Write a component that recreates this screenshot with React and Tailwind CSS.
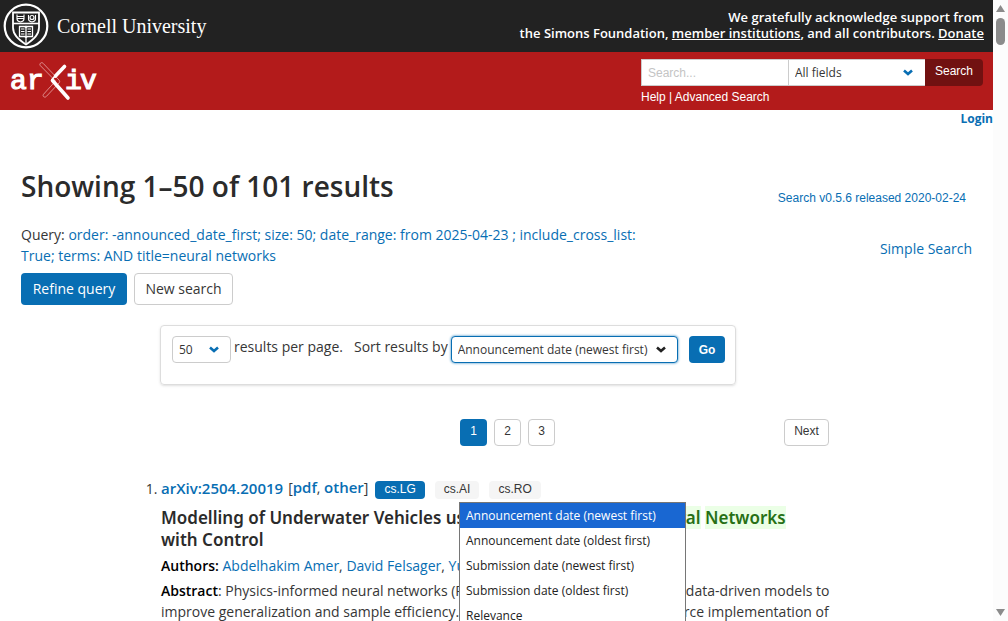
import React from "react";

const link = "text-[#086eb3] hover:underline";

function CornellSeal() {
  return (
    <svg className="size-[46px] shrink-0" viewBox="0 0 46 46" fill="none" stroke="#fff" aria-hidden="true">
      <circle cx="23" cy="23" r="21.3" strokeWidth="2.2" />
      <path d="M10 9.5h26v15c0 7-5 11.500-13 17c-8-5.500-13-10-13-17z" strokeWidth="1.8" />
      <path d="M10 20.500h26" strokeWidth="1.600" />
      <path d="M14 11.500v4.500c0 1.600 1.500 2.500 3.500 3c2-.5 3.500-1.400 3.500-3v-4.500M14 13.500h7M14 15.500h7M25.500 12v4c0 1.600 1.500 2.500 3.500 3c2-.5 3.500-1.400 3.500-3v-4" strokeWidth="1.1" />
      <circle cx="29" cy="14.500" r="2" strokeWidth="1.200" />
      <path d="M23 22.500v18M16.500 23.500h5l1.500 1.200l1.500-1.200h5v10h-5l-1.500 1.200l-1.500-1.200h-5z" strokeWidth="1.300" />
      <path d="M18 26h3.500M18 28.500h3.500M18 31h3.500M24.500 26h3.500M24.500 28.500h3.500M24.500 31h3.500" strokeWidth="1" />
    </svg>
  );
}

function ArxivLogo() {
  return (
    <svg className="h-[42px] w-[90px]" viewBox="0 0 90 42" role="img" aria-label="arXiv">
      <g fill="#fff" fontFamily="'Liberation Mono', monospace" fontSize="28" stroke="#fff" strokeWidth="1.2">
        <text x="1" y="29">a</text>
        <text x="18" y="29">r</text>
        <text x="56" y="29">i</text>
        <text x="71" y="29">v</text>
      </g>
      <path d="M31.500 3.200c.8-.8 1.900-.7 2.700.2l15.800 16.600c.9 1 .9 2 0 3l-12.600 13.400c-.8.9-1.900.9-2.700.3c-.8-.6-.8-1.600-.1-2.500L46.500 21L31.400 5.700c-.7-.8-.7-1.700.1-2.500z" fill="none" stroke="#e8a9a9" strokeWidth="0.8" />
      <path d="M55.500 6.500L46.500 16" stroke="#fff" strokeWidth="3.600" strokeLinecap="round" />
      <path d="M46.500 15.500L43 19.500" stroke="#fff" strokeWidth="1.800" strokeLinecap="round" />
      <path d="M43.500 20.500L59 38" stroke="#fff" strokeWidth="3.600" strokeLinecap="round" />
    </svg>
  );
}

function Select({ id, label, children, className, wrap = "", chevron = "text-[#086eb3]" }) {
  return (
    <span className={"relative inline-flex shrink-0 " + wrap}>
      <select
        id={id}
        aria-label={label}
        className={"h-[27px] w-full appearance-none bg-white pl-1.5 pr-6 text-xs text-[#363636] outline-none " + className}
      >
        {children}
      </select>
      <svg className={"pointer-events-none absolute right-3 top-2 h-3 w-[10px] " + chevron} viewBox="0 0 10 12" fill="none" stroke="currentColor" strokeWidth="2.600" aria-hidden="true">
        <path d="M1 3.500L5 7L9 3.500" />
      </svg>
    </span>
  );
}

const sortOptions = [
  "Announcement date (newest first)",
  "Announcement date (oldest first)",
  "Submission date (newest first)",
  "Submission date (oldest first)",
  "Relevance",
];

function SortMenu() {
  return (
    <ul role="listbox" aria-label="Sort order" className="absolute left-[459px] top-[502px] w-[227px] border border-[#767676] bg-white text-xs text-[#222]">
      {sortOptions.map((o, i) => (
        <li
          key={o}
          role="option"
          aria-selected={i === 0}
          className={i === 0 ? "h-[25px] bg-[#1967d2] px-1.5 leading-[26px] text-white" : "h-[25px] px-1.5 leading-[26px]"}
        >
          {o}
        </li>
      ))}
    </ul>
  );
}

function Scrollbar() {
  return (
    <div className="flex w-[15px] shrink-0 flex-col items-center justify-between bg-[#fcfcfc] py-1" aria-hidden="true">
      <div className="flex flex-col items-center gap-1.5">
        <svg className="h-2 w-[9px]" viewBox="0 0 9 8"><path d="M4.500 1L9 8H0z" fill="#8b8b8b" /></svg>
        <div className="h-[27px] w-[9px] rounded-full bg-[#8b8b8b]" />
      </div>
      <svg className="h-2 w-[9px]" viewBox="0 0 9 8"><path d="M0 0H9L4.500 7z" fill="#8b8b8b" /></svg>
    </div>
  );
}

const arial = "font-['Liberation_Sans',Arial,sans-serif]";
const pageButton = "h-[27px] rounded border border-[#ccc] bg-white pb-1 text-xs text-[#363636] ";

export default function App() {
  return (
    <div className="relative flex h-screen overflow-hidden bg-white font-['Open_Sans',sans-serif] text-sm text-[#363636]">
      <div className="min-w-0 flex-1">
        <header>
          <div className="flex h-[52px] items-center justify-between bg-[#222] pl-[3px] pr-[9px] text-white">
            <a href="#cornell" className="flex items-center gap-2">
              <CornellSeal />
              <span className="font-['Liberation_Serif',serif] text-xl">Cornell University</span>
            </a>
            <p className="pb-0.5 text-right text-[13px] font-semibold leading-4">
              We gratefully acknowledge support from
              <br />
              the Simons Foundation, <a href="#members" className="underline">member institutions</a>, and all contributors.{" "}
              <a href="#donate" className="underline">Donate</a>
            </p>
          </div>
          <div className="flex h-[58px] items-start justify-between bg-[#b31b1b] pl-[9px] pr-2.5 pt-[7px]">
            <a href="#home" className="pt-[1px]"><ArxivLogo /></a>
            <form className={"text-xs text-white " + arial} onSubmit={(e) => e.preventDefault()}>
              <div className="flex">
                <input
                  type="text"
                  aria-label="Search"
                  placeholder="Search..."
                  className="h-[27px] w-[148px] border border-[#ccc] bg-white px-1.5 text-xs text-[#363636] outline-none placeholder:text-[#c4c4c4]"
                />
                <Select id="field" label="Field to search" wrap="w-[136px] font-['Open_Sans',sans-serif]" className="border-y border-[#ccc]">
                  <option>All fields</option>
                </Select>
                <button className="h-[27px] w-[58px] rounded-r-sm bg-[#711111] pb-1 font-medium">Search</button>
              </div>
              <p className="pt-[3px] font-medium leading-4">
                <a href="#help">Help</a> | <a href="#advanced">Advanced Search</a>
              </p>
            </form>
          </div>
          <div className="text-right text-xs font-bold leading-[18px]">
            <a href="#login" className={link}>Login</a>
          </div>
        </header>

        <main className="px-[21px] pt-[38px]">
          <div className="flex h-10 items-center justify-between">
            <h1 className="text-[28px] font-semibold leading-[38px] text-[#2b2b2b]">Showing 1–50 of 101 results</h1>
            <a href="#release" className={"pr-1.5 pt-6 text-xs " + link + " " + arial}>Search v0.5.6 released 2020-02-24</a>
          </div>
          <div className="flex justify-between pt-[18px]">
            <div className="w-[640px]">
              <p className="leading-[21px]">
                Query:{" "}
                <span className="text-[#086eb3]">
                  order: -announced_date_first; size: 50; date_range: from 2025-04-23 ; include_cross_list: True; terms: AND title=neural networks
                </span>
              </p>
              <div className="flex gap-[7px] pt-[7px]">
                <button className="h-8 w-[106px] rounded bg-[#086eb3] text-white">Refine query</button>
                <button className="h-8 w-[99px] rounded border border-[#ccc]">New search</button>
              </div>
            </div>
            <a href="#simple" className={"pt-[15px] leading-5 " + link}>Simple Search</a>
          </div>

          <form
            className="ml-[139px] mt-5 flex h-[60px] w-[576px] items-start whitespace-nowrap rounded-sm border border-[#ddd] pl-[11px] pr-2.5 pt-2.5 shadow-sm"
            onSubmit={(e) => e.preventDefault()}
          >
            <Select id="size" wrap="w-[59px]" className="rounded border border-[#ccc]">
              <option>50</option>
            </Select>
            <label htmlFor="size" className="pl-[3px] leading-[22px]">results per page.</label>
            <label htmlFor="order" className="pl-[11px] leading-[22px]">Sort results by</label>
            <Select
              id="order"
              wrap="ml-[3px] w-[227px]"
              chevron="text-[#222]"
              className="rounded border border-[#086eb3] shadow-[0_0_2px_1px_#9cc6e2]"
            >
              {sortOptions.map((o) => <option key={o}>{o}</option>)}
            </Select>
            <button className={"ml-auto h-[27px] w-9 shrink-0 rounded-sm bg-[#086eb3] text-xs font-bold text-white " + arial}>Go</button>
          </form>

          <nav className={"ml-[140px] mt-[34px] flex w-[668px] " + arial} aria-label="pagination">
            <div className="flex flex-1 justify-center gap-[7px] pl-[70px]">
              <button className="h-[27px] w-[27px] rounded bg-[#086eb3] pb-1 text-xs text-white" aria-current="page">1</button>
              <button className={pageButton + "w-[27px]"}>2</button>
              <button className={pageButton + "w-[27px]"}>3</button>
            </div>
            <button className={pageButton + "w-[45px]"}>Next</button>
          </nav>

          <ol className="ml-[140px] mt-[30px] w-[674px] list-decimal">
            <li>
              <div className="flex items-center leading-[22px]">
                <p className="text-[15px] font-semibold"><a href="#abs" className={link}>arXiv:2504.20019</a></p>
                <p className="pl-[5px]">
                  [<a href="#pdf" className={"text-[15px] font-semibold " + link}>pdf</a>, <a href="#other" className={"text-[15px] font-semibold " + link}>other</a>]
                </p>
                <div className={"flex gap-2.5 pl-[7px] pt-1 text-xs leading-4 " + arial}>
                  <span className="h-[18px] rounded bg-[#086eb3] px-[9px] text-white">cs.LG</span>
                  <span className="h-[18px] rounded bg-[#f5f5f5] px-[9px]">cs.AI</span>
                  <span className="h-[18px] rounded bg-[#f5f5f5] px-[9px]">cs.RO</span>
                </div>
              </div>
              <h2 className="w-[650px] pt-2 font-['Noto_Sans','Open_Sans',sans-serif] text-[17px] font-semibold leading-[22px] text-[#2b2b2b]">
                Modelling of Underwater Vehicles using Physics-Informed{" "}
                <mark className="bg-[#ebffe6] text-[#277016]">Neural</mark>{" "}
                <mark className="bg-[#ebffe6] text-[#277016]">Networks</mark> with Control
              </h2>
              <p className="pt-1 leading-[22px]">
                <span className="font-semibold text-black">Authors:</span>{" "}
                <a href="#a1" className={link}>Abdelhakim Amer</a>, <a href="#a2" className={link}>David Felsager</a>,{" "}
                <a href="#a3" className={link}>Yury Brodskiy</a>, <a href="#a4" className={link}>Andriy Sarabakha</a>
              </p>
              <p className="pt-[3px] leading-[21px]">
                <span className="font-semibold text-black">Abstract</span>: Physics-informed neural networks (PINNs) integrate physical laws with data-driven models to improve
                generalization and sample efficiency. This work introduces an open-source implementation of the Physics-Informed Neural
                Network with Control framework.
              </p>
            </li>
          </ol>
        </main>
      </div>
      <Scrollbar />
      <SortMenu />
    </div>
  );
}
